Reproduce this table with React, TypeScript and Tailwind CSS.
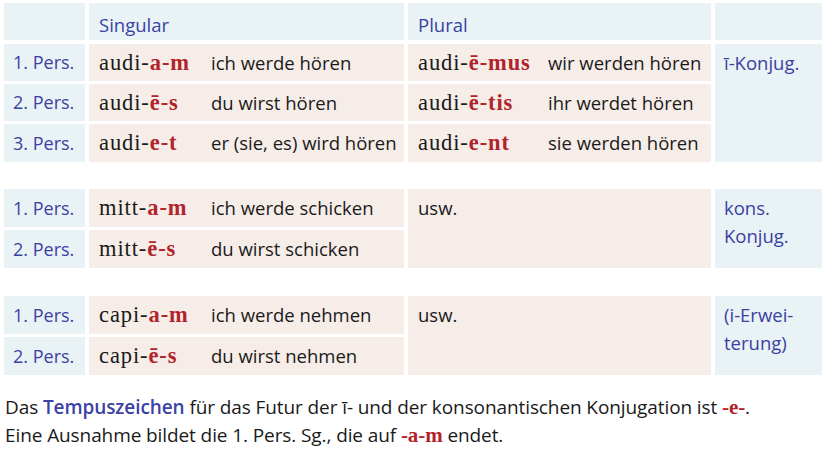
import React from 'react';

const sans = "font-['Open_Sans',sans-serif]";
const serif = "font-['Liberation_Serif',serif] text-[22.5px] tracking-[0.04em] text-[#1a1a1a]";

type Row = { pers: string; stem: string; ending: string; de: string; plStem?: string; plEnding?: string; plDe?: string };

function Form({ stem, ending }: { stem: string; ending: string }) {
  return (
    <span className={serif}>
      {stem}-<b className="text-[#b3232b]">{ending}</b>
    </span>
  );
}

function PersCell({ label }: { label: string }) {
  return (
    <div className={`bg-[#e9f2f5] flex items-center pl-[9px] text-[18px] text-[#3b41a3] ${sans}`}>{label}</div>
  );
}

function SgCell({ r }: { r: Row }) {
  return (
    <div className="bg-[#f6ede8] flex items-center pl-[10px]">
      <div className="w-[112px]">
        <Form stem={r.stem} ending={r.ending} />
      </div>
      <span className={`text-[18.5px] text-[#1a1a1a] ${sans}`}>{r.de}</span>
    </div>
  );
}

function PlCell({ r }: { r: Row }) {
  return (
    <div className="bg-[#f6ede8] flex items-center pl-[10px]">
      <div className="w-[130px]">
        <Form stem={r.plStem!} ending={r.plEnding!} />
      </div>
      <span className={`text-[18.5px] text-[#1a1a1a] ${sans}`}>{r.plDe}</span>
    </div>
  );
}

const audire: Row[] = [
  { pers: '1. Pers.', stem: 'audi', ending: 'a-m', de: 'ich werde hören', plStem: 'audi', plEnding: 'ē-mus', plDe: 'wir werden hören' },
  { pers: '2. Pers.', stem: 'audi', ending: 'ē-s', de: 'du wirst hören', plStem: 'audi', plEnding: 'ē-tis', plDe: 'ihr werdet hören' },
  { pers: '3. Pers.', stem: 'audi', ending: 'e-t', de: 'er (sie, es) wird hören', plStem: 'audi', plEnding: 'e-nt', plDe: 'sie werden hören' },
];

const mittere: Row[] = [
  { pers: '1. Pers.', stem: 'mitt', ending: 'a-m', de: 'ich werde schicken' },
  { pers: '2. Pers.', stem: 'mitt', ending: 'ē-s', de: 'du wirst schicken' },
];

const capere: Row[] = [
  { pers: '1. Pers.', stem: 'capi', ending: 'a-m', de: 'ich werde nehmen' },
  { pers: '2. Pers.', stem: 'capi', ending: 'ē-s', de: 'du wirst nehmen' },
];

const cols = 'grid grid-cols-[81px_315px_303px_107px] gap-x-[4px] gap-y-[3px] pl-[4px]';

function UswGroup({ rows, note }: { rows: Row[]; note: React.ReactNode }) {
  return (
    <div className={`${cols} grid-rows-[38px_38px]`}>
      {rows.map((r, i) => (
        <React.Fragment key={i}>
          <div style={{ gridColumn: 1, gridRow: i + 1 }} className="flex [&>div]:flex-1">
            <PersCell label={r.pers} />
          </div>
          <div style={{ gridColumn: 2, gridRow: i + 1 }} className="flex [&>div]:flex-1">
            <SgCell r={r} />
          </div>
        </React.Fragment>
      ))}
      <div className={`col-start-3 row-start-1 row-span-2 bg-[#f6ede8] pl-[10px] pt-[5px] text-[18.5px] text-[#1a1a1a] ${sans}`}>usw.</div>
      <div className={`col-start-4 row-start-1 row-span-2 bg-[#e9f2f5] pl-[9px] pt-[5px] text-[18.5px] leading-[28px] text-[#3b41a3] ${sans}`}>
        {note}
      </div>
    </div>
  );
}

export default function App() {
  return (
    <div className="w-[822px] h-[450px] bg-white pt-[3px] overflow-hidden">
      <div className={`${cols} h-[37px]`}>
        <div className="bg-[#e9f2f5]" />
        <div className={`bg-[#e9f2f5] pl-[10px] pt-[8px] leading-[28px] text-[18.5px] text-[#3b41a3] ${sans}`}>Singular</div>
        <div className={`bg-[#e9f2f5] pl-[10px] pt-[8px] leading-[28px] text-[18.5px] text-[#3b41a3] ${sans}`}>Plural</div>
        <div className="bg-[#e9f2f5]" />
      </div>

      <div className={`${cols} grid-rows-[37px_37px_38px] mt-[4px]`}>
        {audire.map((r, i) => (
          <React.Fragment key={i}>
            <div style={{ gridColumn: 1, gridRow: i + 1 }} className="flex [&>div]:flex-1">
              <PersCell label={r.pers} />
            </div>
            <div style={{ gridColumn: 2, gridRow: i + 1 }} className="flex [&>div]:flex-1">
              <SgCell r={r} />
            </div>
            <div style={{ gridColumn: 3, gridRow: i + 1 }} className="flex [&>div]:flex-1">
              <PlCell r={r} />
            </div>
          </React.Fragment>
        ))}
        <div className={`col-start-4 row-start-1 row-span-3 bg-[#e9f2f5] pl-[9px] pt-[5px] text-[18.5px] leading-[28px] text-[#3b41a3] ${sans}`}>
          ī-Konjug.
        </div>
      </div>

      <div className="mt-[27px]">
        <UswGroup rows={mittere} note={<>kons.<br />Konjug.</>} />
      </div>

      <div className="mt-[28px]">
        <UswGroup rows={capere} note={<>(i-Erwei-<br />terung)</>} />
      </div>

      <div className={`mt-[18px] pl-[5px] text-[19px] leading-[28px] tracking-[-0.005em] text-[#1a1a1a] ${sans}`}>
        <p>
          Das <span className="font-semibold text-[#3b41a3]">Tempuszeichen</span> für das Futur der ī- und der konsonantischen Konjugation ist{' '}
          <b className="font-['Liberation_Serif',serif] text-[21px] text-[#b3232b]">-e-</b>.
        </p>
        <p>
          Eine Ausnahme bildet die 1. Pers. Sg., die auf <b className="font-['Liberation_Serif',serif] text-[21px] text-[#b3232b]">-a-m</b> endet.
        </p>
      </div>
    </div>
  );
}
